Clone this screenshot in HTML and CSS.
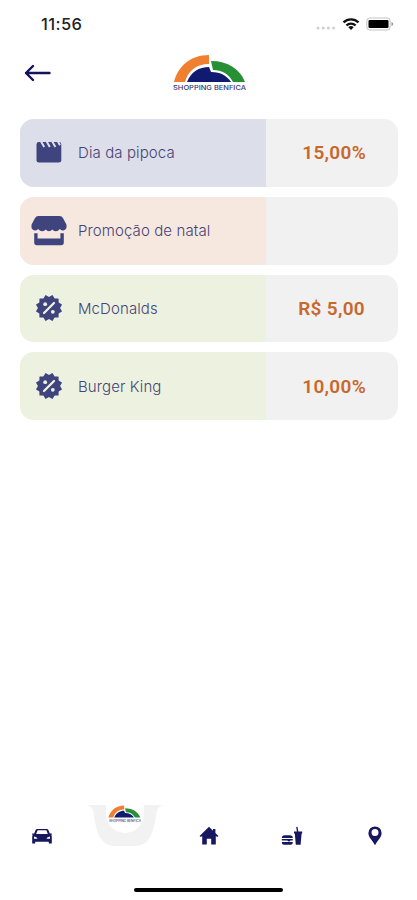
FILE: index.html
```html
<!DOCTYPE html>
<html lang="pt-BR">
<head>
    <meta charset="UTF-8">
    <meta name="viewport" content="width=device-width, initial-scale=1.0">
    <title>Shopping Benfica</title>
    <link rel="stylesheet" href="styles.css">
</head>
<body>
    <svg width="0" height="0" class="symbols">
        <symbol id="arches" viewBox="0 0 76 40">
            <path fill="#f08030" d="M2 28C6 12 19 1 37 1v9C24 10 16 17 13 28z"/>
            <path fill="#101a70" d="M15 28c4-10 12-15 22-15l2 5c10 0 16 4 20 10z"/>
            <path fill="#269035" d="M39 7c17 0 29 8 34 21H61C57 20 50 16 41 16z"/>
        </symbol>
        <symbol id="discount" viewBox="0 0 28 28">
            <rect x="4.4" y="4.4" width="19.2" height="19.2" rx=".6"/>
            <rect x="4.4" y="4.4" width="19.2" height="19.2" rx=".6" transform="rotate(30 14 14)"/>
            <rect x="4.4" y="4.4" width="19.2" height="19.2" rx=".6" transform="rotate(60 14 14)"/>
            <path d="M9 19L19 9" stroke="#edf2df" stroke-width="2.3" stroke-linecap="round"/>
            <circle cx="10.2" cy="10.2" r="1.9" fill="#edf2df"/>
            <circle cx="17.8" cy="17.8" r="1.9" fill="#edf2df"/>
        </symbol>
    </svg>

    <div class="screen">
        <div class="status-bar">
            <span class="time">11:56</span>
            <div class="status-icons">
                <svg class="signal" width="20" height="6" viewBox="0 0 20 6" fill="#cfcfcf">
                    <circle cx="2" cy="3" r="1.5"/><circle cx="7.2" cy="3" r="1.5"/><circle cx="12.4" cy="3" r="1.5"/><circle cx="17.6" cy="3" r="1.5"/>
                </svg>
                <svg class="wifi" width="18" height="14" viewBox="0 0 18 14" fill="none" stroke="#111" stroke-width="2.3">
                    <path d="M1.5 5.4a10.6 10.6 0 0 1 15 0M4.4 8.5a6.5 6.5 0 0 1 9.2 0"/>
                    <path d="M6.3 10.3a3.9 3.9 0 0 1 5.4 0L9 13z" fill="#111" stroke="none"/>
                </svg>
                <svg class="battery" width="28" height="14" viewBox="0 0 28 14">
                    <rect x=".8" y="1" width="23.4" height="12" rx="3" fill="#fff" stroke="#c4c4c4"/>
                    <rect x="2.5" y="2.9" width="20" height="8.2" rx="1" fill="#000"/>
                    <path d="M25.5 5v4q1.8-.5 1.8-2t-1.8-2" fill="#999"/>
                </svg>
            </div>
        </div>

        <header class="header">
            <svg class="back" width="28" height="18" viewBox="0 0 28 18" fill="none" stroke="#14125e" stroke-width="2.4" stroke-linecap="round" stroke-linejoin="round">
                <path d="M25.5 9H2M9 2L2 9l7 7"/>
            </svg>
            <svg class="logo" width="76" height="40" viewBox="0 0 76 40">
                <use href="#arches" width="76" height="40"/>
                <text x="1" y="36.3" textLength="73" lengthAdjust="spacingAndGlyphs">SHOPPING BENFICA</text>
            </svg>
        </header>

        <main class="cards">
            <div class="card">
                <div class="info blue">
                    <svg class="icon" width="38" height="34" viewBox="0 0 38 34">
                        <rect x="6.5" y="6" width="24.8" height="20.6" rx="2.4"/>
                        <path d="M10.8 5l3.4 6M16.4 5l3.4 6M22 5l3.4 6M27.600 5l2.400 4.200" stroke="#dcdee9" stroke-width="2"/>
                    </svg>
                    <span class="name">Dia da pipoca</span>
                </div>
                <div class="value">15,00%</div>
            </div>
            <div class="card">
                <div class="info orange">
                    <svg class="icon" width="38" height="34" viewBox="0 0 38 34">
                        <path d="M8.5 2h21q2.4 0 3.600 2.200l3.300 6.200q1 5-3 6-2.200.4-3.600-1.300-2 2.500-4.300 2.200-2 0-3.200-1.700-1.300 1.700-3.300 1.700t-3.300-1.700q-1.300 1.700-3.200 1.700-2.300.3-4.300-2.200-1.400 1.700-3.600 1.300-4-1-3-6l3.300-6.200Q6.100 2 8.500 2z"/>
                        <path d="M4.200 19.200h3.400v5.200h22.800v-5.200h3.400v9.400q0 2.600-2.600 2.600H6.800q-2.600 0-2.600-2.600z"/>
                    </svg>
                    <span class="name">Promoção de natal</span>
                </div>
                <div class="value"></div>
            </div>
            <div class="card">
                <div class="info green">
                    <svg class="icon" width="38" height="28"><use href="#discount" x="5" width="28" height="28"/></svg>
                    <span class="name">McDonalds</span>
                </div>
                <div class="value currency">R$ 5,00</div>
            </div>
            <div class="card">
                <div class="info green">
                    <svg class="icon" width="38" height="28"><use href="#discount" x="5" width="28" height="28"/></svg>
                    <span class="name">Burger King</span>
                </div>
                <div class="value">10,00%</div>
            </div>
        </main>

        <nav class="tab-bar">
            <div class="tab">
                <svg width="22" height="22" viewBox="0 0 22 22">
                    <path fill-rule="evenodd" d="M6.2 4h9.6q1.2 0 1.6 1.1l1.4 3.3h2v1.4h-.8q.8.7.8 2v6.700h-3v-1.700H4.200v1.700h-3v-6.700q0-1.300.8-2h-.8V8.400h2l1.400-3.300Q5 4 6.200 4zM6.600 5.300L5.200 9h11.600l-1.400-3.700zM3 11.500v2.300h3.600q-.6-2-3.600-2.300zM19 11.500v2.300h-3.600q.6-2 3.600-2.300z"/>
                </svg>
            </div>
            <div class="tab current">
                <svg width="76" height="42" viewBox="0 0 76 42">
                    <path fill="#f2f2f2" d="M0 0h76q-5 1-6.500 7C67 30 61 41 48 41H28C15 41 9 30 6.500 7Q5 1 0 0z"/>
                    <path fill="#fff" d="M19 0h38v9a19 19 0 0 1-38 0z"/>
                    <use href="#arches" x="20.5" y="0" width="34.2" height="18"/>
                    <text x="22" y="16.7" class="small" textLength="32" lengthAdjust="spacingAndGlyphs">SHOPPING BENFICA</text>
                </svg>
            </div>
            <div class="tab">
                <svg width="22" height="22" viewBox="0 0 22 22">
                    <path d="M11 1.800l4 3.900V4h2.400v4l3 3-1.200 1.100-1.400-1.200v8.700h-4.600v-5.800H8.800v5.800H4.200v-8.700l-1.400 1.200L1.600 11z"/>
                </svg>
            </div>
            <div class="tab">
                <svg width="22" height="22" viewBox="0 0 22 22">
                    <path d="M.8 13q0-2.800 3-2.800h5q3 0 3 2.800zM.8 14h11v1.500H9.500L8 16.700l-1.700-1.200H.8zM.8 17.100h11q0 2.700-2.200 2.700H3q-2.200 0-2.200-2.700z"/>
                    <path d="M13 6.500h2.900L15.200 2l1.300-.3.800 4.800h3.900v2h-.6l-1 11.300h-4.800l-1-11.300H13z"/>
                </svg>
            </div>
            <div class="tab">
                <svg width="22" height="22" viewBox="0 0 22 22">
                    <path fill-rule="evenodd" d="M11 1.400a6.600 6.600 0 0 1 6.600 6.600c0 4.500-4.300 7.700-6.600 12.300C8.700 15.700 4.400 12.500 4.400 8A6.600 6.600 0 0 1 11 1.400zM11 4.100a3.500 3.500 0 1 0 0 7 3.500 3.500 0 1 0 0-7z"/>
                </svg>
            </div>
        </nav>
        <div class="home-indicator"></div>
    </div>
</body>
</html>
```
FILE: styles.css
```css
body {
    margin: 0;
    background-color: #fff;
    font-family: 'Inter', sans-serif;
}

.symbols {
    display: block;
}

.screen {
    width: 417px;
    height: 900px;
    display: flex;
    flex-direction: column;
    overflow: hidden;
}

.status-bar {
    height: 48px;
    padding: 0 25px 0 41px;
    display: flex;
    justify-content: space-between;
    align-items: center;
    box-sizing: border-box;
}

.time {
    font-size: 16.5px;
    font-weight: 500;
    letter-spacing: 0.4px;
    color: #222;
}

.status-icons {
    display: flex;
    align-items: center;
}

.signal {
    margin-top: 8px;
    margin-right: 6px;
}

.wifi {
    margin-right: 6px;
}

.battery {
    margin-right: -2px;
}

.header {
    height: 71px;
    padding-left: 24px;
    display: flex;
    align-items: flex-start;
    box-sizing: border-box;
}

.back {
    margin-top: 16px;
}

.logo {
    margin-top: 6px;
    margin-left: 120px;
}

.logo text {
    font-size: 6.3px;
    font-weight: 500;
    fill: #34386f;
}

.cards {
    flex: 1;
    padding: 0 19px 0 20px;
    display: flex;
    flex-direction: column;
    gap: 10px;
}

.card {
    height: 67.8px;
    display: flex;
    border-radius: 14px;
    overflow: hidden;
    background-color: #f1f1f1;
}

.info {
    width: 246px;
    padding-left: 10px;
    display: flex;
    align-items: center;
    box-sizing: border-box;
}

.blue {
    background-color: #dcdee9;
}

.orange {
    background-color: #f6e8de;
}

.green {
    background-color: #edf2e0;
}

.icon {
    fill: #3f447e;
    margin-right: 10px;
}

.name {
    font-size: 15px;
    font-weight: 350;
    letter-spacing: 0.1px;
    color: #454477;
}

.value {
    flex: 1;
    padding-right: 32px;
    display: flex;
    align-items: center;
    justify-content: flex-end;
    font-family: 'Roboto', sans-serif;
    font-size: 19px;
    font-weight: 600;
    letter-spacing: 0.3px;
    color: #c8682c;
}

.currency {
    padding-right: 33px;
}

.tab-bar {
    height: 62px;
    display: flex;
    align-items: center;
}

.tab {
    flex: 1;
    display: flex;
    justify-content: center;
    fill: #17175f;
}

.current {
    align-self: flex-start;
}

.small {
    font-size: 2.8px;
    font-weight: 500;
    fill: #34386f;
}

.home-indicator {
    width: 149px;
    height: 4px;
    margin: 21px auto 8px;
    border-radius: 2px;
    background-color: #000;
}
```
